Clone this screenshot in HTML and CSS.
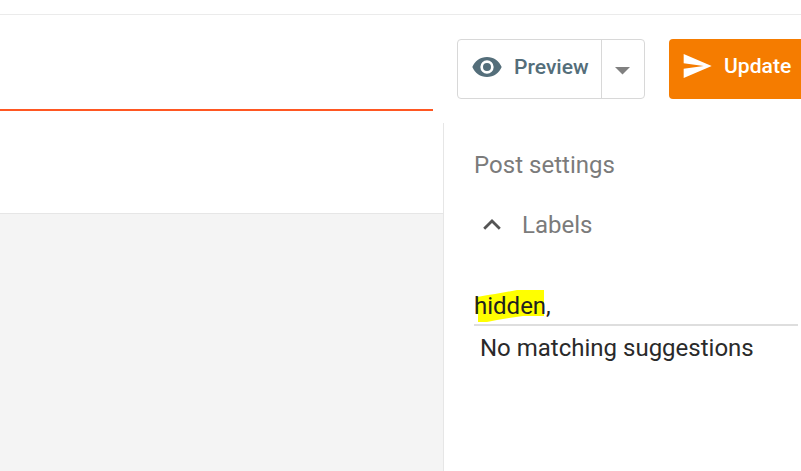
FILE: index.html
```html
<!DOCTYPE html>
<html lang="en">
<head>
<meta charset="utf-8">
<title>Post editor</title>
<link rel="stylesheet" href="styles.css">
</head>
<body>
<div class="topbar"></div>
<header class="toolbar">
  <div class="title-field"></div>
  <div class="preview-group">
    <button class="preview"><svg width="32" height="32" viewBox="0 0 24 24"><path fill="currentColor" d="M12 4.5C7 4.5 2.73 7.61 1 12c1.73 4.39 6 7.5 11 7.5s9.270-3.110 11-7.500c-1.730-4.390-6-7.500-11-7.500zM12 17a5 5 0 1 1 0-10 5 5 0 0 1 0 10zm0-8a3 3 0 1 0 0 6 3 3 0 0 0 0-6z"/></svg><span>Preview</span></button>
    <button class="more" aria-label="More"><svg width="15" height="8" viewBox="0 0 15 8"><path fill="#808080" d="M0 0h15L7.500 7.500z"/></svg></button>
  </div>
  <button class="update"><svg width="32" height="32" viewBox="0 0 24 24"><path fill="currentColor" d="M2.010 21L23 12 2.010 3 2 10l15 2-15 2z"/></svg><span>Update</span></button>
</header>
<main class="workspace">
  <section class="editor">
    <div class="format-bar"></div>
    <div class="canvas"></div>
  </section>
  <aside class="settings">
    <h2>Post settings</h2>
    <div class="section"><svg width="18" height="11" viewBox="0 0 18 11"><path fill="none" stroke="#555" stroke-width="2.800" d="M1.200 9.700L9 2l7.800 7.700"/></svg><span>Labels</span></div>
    <div class="field"><svg class="marker" width="71" height="33" viewBox="0 0 71 33"><path fill="#ff0" d="M3 7L14 5l7-1 17-3 5-1h27v26H49l-14 2-12 2-10 2H4V24H3z"/></svg><span class="value">hidden,</span></div>
    <p class="hint">No matching suggestions</p>
  </aside>
</main>
</body>
</html>
```
FILE: styles.css
```css
* { box-sizing: border-box; }
body { margin: 0; height: 471px; overflow: hidden; display: flex; flex-direction: column; background: #fff; font-family: Roboto, sans-serif; }
svg { display: block; flex: none; }
button { margin: 0; padding: 0; border: 0; background: none; font: 500 21.100px/28px Roboto, sans-serif; display: flex; align-items: center; }
.topbar { height: 15px; flex: none; border-bottom: 1px solid #ebebeb; }
.toolbar { height: 108px; flex: none; display: flex; align-items: flex-start; }
.title-field { width: 433px; height: 96px; flex: none; border-bottom: 2px solid #ff5722; }
.preview-group { margin: 24px 0 0 24px; width: 188px; height: 60px; flex: none; display: flex; border: 1px solid #d8d8d8; border-radius: 4px; }
.preview { width: 144px; padding: 0 0 4px 12.500px; gap: 11.500px; color: #546e7a; border-right: 1px solid #d8d8d8; }
.more { flex: 1; justify-content: center; padding: 4px 1px 0 0; }
.update { margin: 24px 0 0 24px; width: 150px; height: 60px; flex: none; padding: 0 0 6px 11.500px; gap: 11.500px; background: #f57c00; color: #fff; border-radius: 4px; }
.workspace { flex: 1; display: flex; }
.editor { width: 443px; flex: none; display: flex; flex-direction: column; }
.format-bar { height: 91px; flex: none; border-bottom: 1px solid #e6e6e6; }
.canvas { flex: 1; background: #f4f4f4; }
.settings { flex: 1; border-left: 1px solid #e6e6e6; padding: 26px 3px 0 30px; font-size: 24px; line-height: 32px; }
h2 { margin: 0; font: inherit; letter-spacing: .03px; color: #7b7b7b; }
.section { margin-top: 28px; padding-left: 9px; display: flex; align-items: center; gap: 21px; color: #7b7b7b; }
.section svg { margin-top: -2px; }
.field { position: relative; margin-top: 48px; height: 37px; padding-top: 1px; border-bottom: 2px solid #dedede; color: #212121; }
.marker { position: absolute; left: 0; top: 1px; }
.value { position: relative; }
.hint { margin: 6px 0 0 6px; color: #2a2a2a; }
```
